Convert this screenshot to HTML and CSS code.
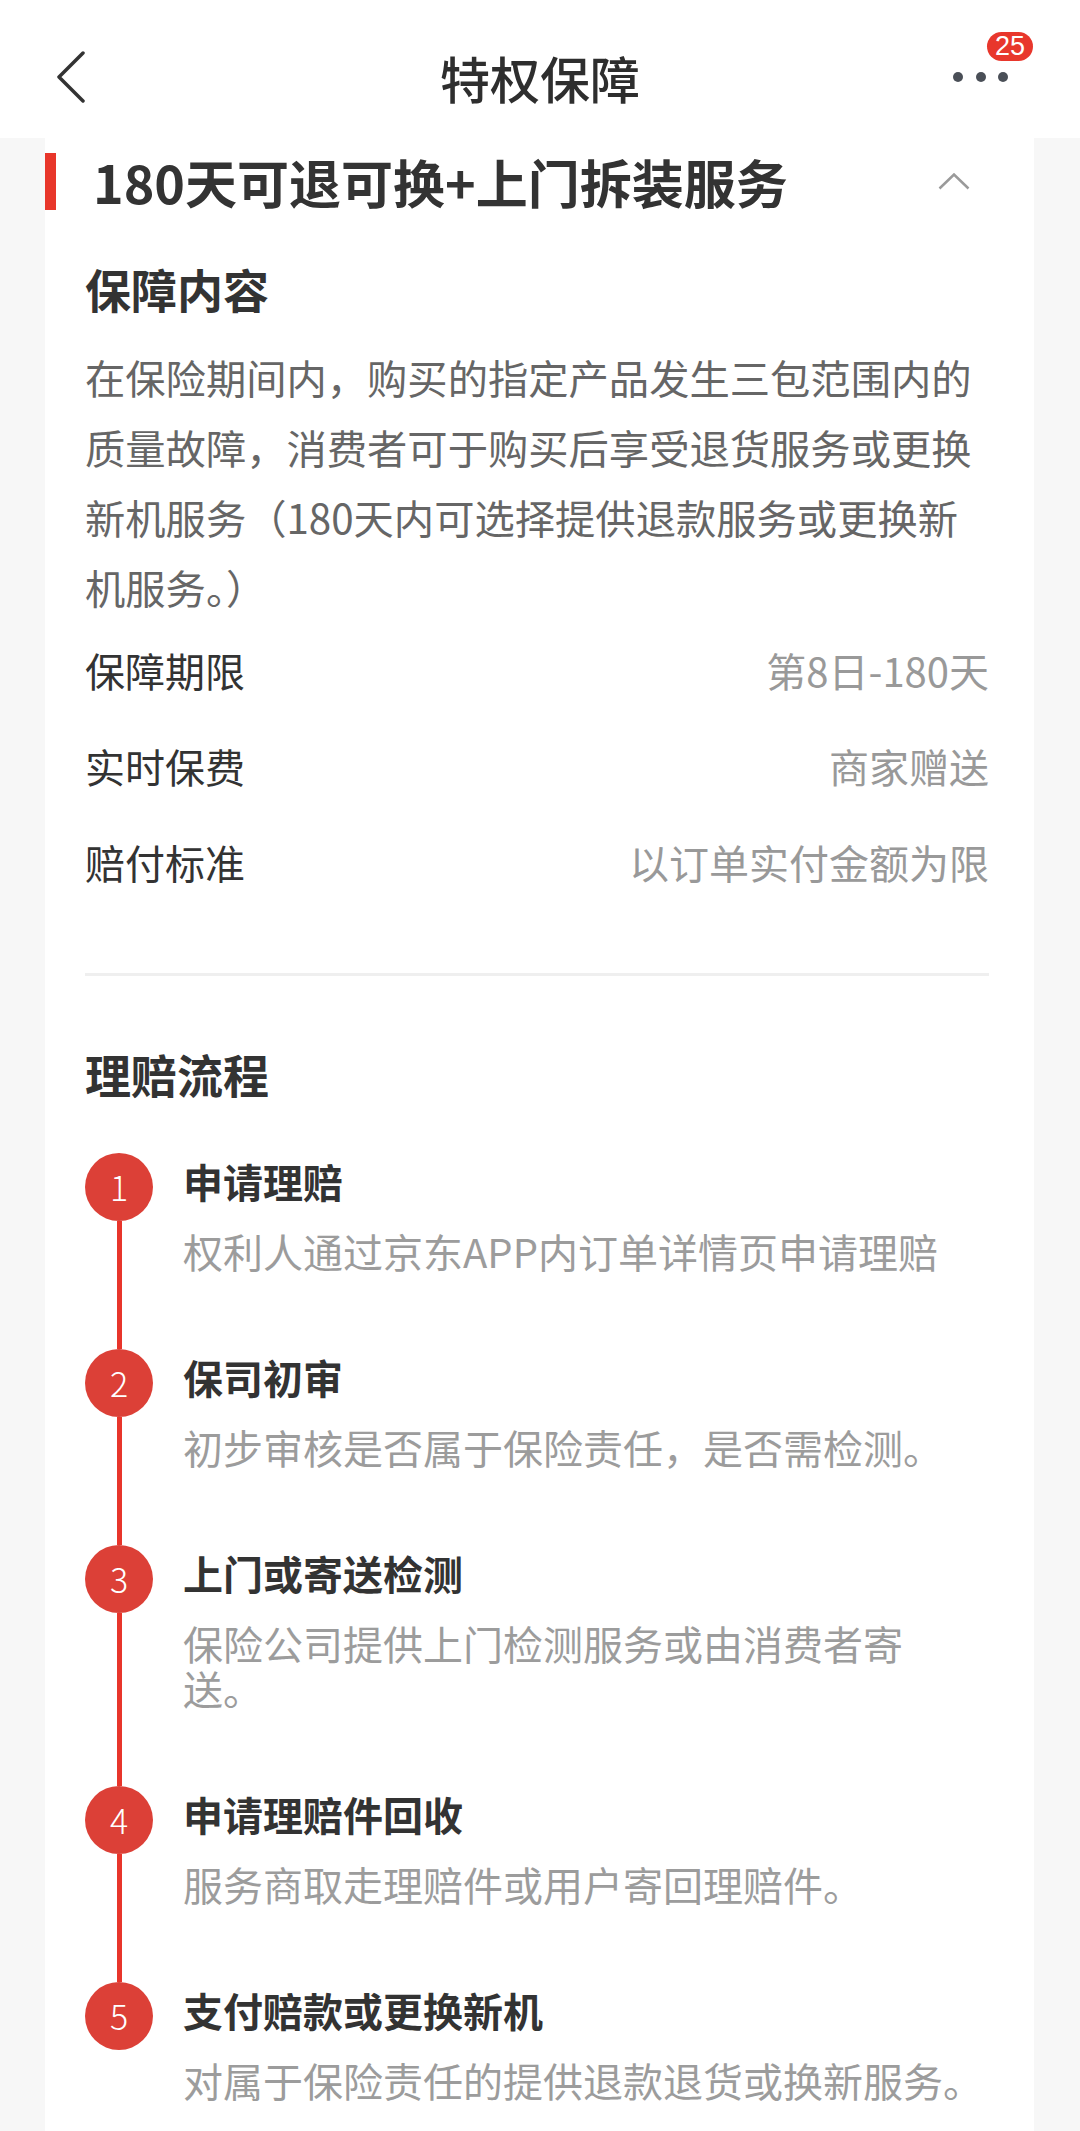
FILE: index.html
```html
<!DOCTYPE html>
<html lang="zh-CN">
<head>
<meta charset="utf-8">
<title>特权保障</title>
<link rel="stylesheet" href="styles.css">
</head>
<body>
<header class="header">
  <div class="header-left">
    <svg class="back" width="30" height="52" viewBox="0 0 30 52"><polyline points="27,2 3,26 27,50" fill="none" stroke="#333" stroke-width="3.5" stroke-linecap="round" stroke-linejoin="round"/></svg>
  </div>
  <h1 class="header-title">特权保障</h1>
  <div class="header-right">
    <div class="more">
      <span class="dot"></span><span class="dot"></span><span class="dot"></span>
      <span class="badge">25</span>
    </div>
  </div>
</header>

<main class="card">
  <div class="section-head">
    <span class="bar"></span>
    <h2 class="section-title">180天可退可换+上门拆装服务</h2>
    <svg class="chev-up" width="32" height="17" viewBox="0 0 32 17"><polyline points="1.5,15.5 16,1.5 30.5,15.5" fill="none" stroke="#9a9a9a" stroke-width="2.5"/></svg>
  </div>

  <h3 class="heading">保障内容</h3>
  <p class="para">在保险期间内，购买的指定产品发生三包范围内的质量故障，消费者可于购买后享受退货服务或更换新机服务（180天内可选择提供退款服务或更换新机服务。）</p>

  <div class="row"><span class="label">保障期限</span><span class="value">第8日-180天</span></div>
  <div class="row"><span class="label">实时保费</span><span class="value">商家赠送</span></div>
  <div class="row"><span class="label">赔付标准</span><span class="value">以订单实付金额为限</span></div>

  <div class="divider"></div>

  <h3 class="heading heading-flow">理赔流程</h3>

  <ol class="steps">
    <li class="step">
      <div class="marker"><span class="circle">1</span><span class="line"></span></div>
      <div class="step-body"><div class="step-title">申请理赔</div><div class="step-desc">权利人通过京东APP内订单详情页申请理赔</div></div>
    </li>
    <li class="step">
      <div class="marker"><span class="circle">2</span><span class="line"></span></div>
      <div class="step-body"><div class="step-title">保司初审</div><div class="step-desc">初步审核是否属于保险责任，是否需检测。</div></div>
    </li>
    <li class="step">
      <div class="marker"><span class="circle">3</span><span class="line"></span></div>
      <div class="step-body"><div class="step-title">上门或寄送检测</div><div class="step-desc">保险公司提供上门检测服务或由消费者寄<br>送。</div></div>
    </li>
    <li class="step">
      <div class="marker"><span class="circle">4</span><span class="line"></span></div>
      <div class="step-body"><div class="step-title">申请理赔件回收</div><div class="step-desc">服务商取走理赔件或用户寄回理赔件。</div></div>
    </li>
    <li class="step">
      <div class="marker"><span class="circle">5</span></div>
      <div class="step-body"><div class="step-title">支付赔款或更换新机</div><div class="step-desc">对属于保险责任的提供退款退货或换新服务。</div></div>
    </li>
  </ol>
</main>
</body>
</html>
```

FILE: styles.css
```css
* { box-sizing: border-box; }

html, body {
  margin: 0;
  padding: 0;
}

body {
  width: 1080px;
  min-height: 2131px;
  background: #f7f7f7;
  font-family: "Noto Sans CJK SC", "Noto Sans", sans-serif;
  color: #333;
  overflow-x: hidden;
}

/* header */
.header {
  height: 138px;
  padding-top: 16px;
  background: #fff;
  display: grid;
  grid-template-columns: 1fr auto 1fr;
  align-items: center;
}

.header-left {
  padding-left: 56px;
  display: flex;
  align-items: center;
}

.back { display: block; }

.header-title {
  margin: 0;
  font-size: 50px;
  font-weight: 500;
  line-height: 60px;
  color: #2e2e2e;
}

.header-right {
  display: flex;
  justify-content: flex-end;
  padding-right: 72px;
}

.more {
  position: relative;
  display: flex;
  gap: 12.5px;
  align-items: center;
  height: 10px;
}

.dot {
  width: 10px;
  height: 10px;
  border-radius: 50%;
  background: #4a4f57;
}

.badge {
  position: absolute;
  left: 34px;
  top: -40px;
  height: 29px;
  min-width: 46px;
  padding: 0 5px;
  border-radius: 15px;
  background: #e8372c;
  color: #fff;
  font-family: "Liberation Sans", "Noto Sans", sans-serif;
  font-size: 27px;
  line-height: 29px;
  text-align: center;
}

/* card */
.card {
  margin: 0 46px 0 45px;
  background: #fff;
  padding: 15px 45px 0 40px;
  min-height: 1993px;
}

.section-head {
  display: flex;
  align-items: center;
  height: 57px;
  margin-left: -40px;
}

.bar {
  align-self: stretch;
  width: 11px;
  background: #e8362a;
}

.section-title {
  margin: 0 0 0 37px;
  font-size: 52px;
  font-weight: 700;
  line-height: 57px;
  color: #333;
}

.chev-up {
  margin-left: auto;
  margin-right: 19px;
}

.heading {
  margin: 48px 0 0;
  font-size: 46px;
  font-weight: 600;
  line-height: 60px;
  color: #333;
}

.heading-flow { margin-top: 67px; }

.para {
  margin: 24px 0 0;
  width: 895px;
  font-size: 40.3px;
  line-height: 70px;
  color: #666;
}

.row {
  display: flex;
  justify-content: space-between;
  align-items: center;
  height: 96px;
  font-size: 40px;
}

.row:first-of-type { margin-top: 4px; }

.label { color: #333; }
.value { color: #999; }

.divider {
  margin-top: 63px;
  height: 3px;
  background: #efefef;
}

/* steps */
.steps {
  list-style: none;
  margin: 50px 0 0;
  padding: 0;
}

.step {
  display: flex;
}

.marker {
  width: 68px;
  flex: none;
  display: flex;
  flex-direction: column;
  align-items: center;
}

.circle {
  width: 68px;
  height: 68px;
  border-radius: 50%;
  background: #dc4037;
  color: #fff;
  font-size: 34px;
  font-weight: 300;
  line-height: 68px;
  text-align: center;
  flex: none;
}

.line {
  flex: 1;
  width: 5px;
  background: #e8352b;
}

.step-body {
  margin-left: 30px;
  padding-bottom: 75px;
}

.step-title {
  font-size: 40px;
  font-weight: 600;
  line-height: 56px;
  color: #333;
}

.step-desc {
  margin-top: 20px;
  font-size: 40px;
  line-height: 45px;
  color: #9c9c9c;
}
```
